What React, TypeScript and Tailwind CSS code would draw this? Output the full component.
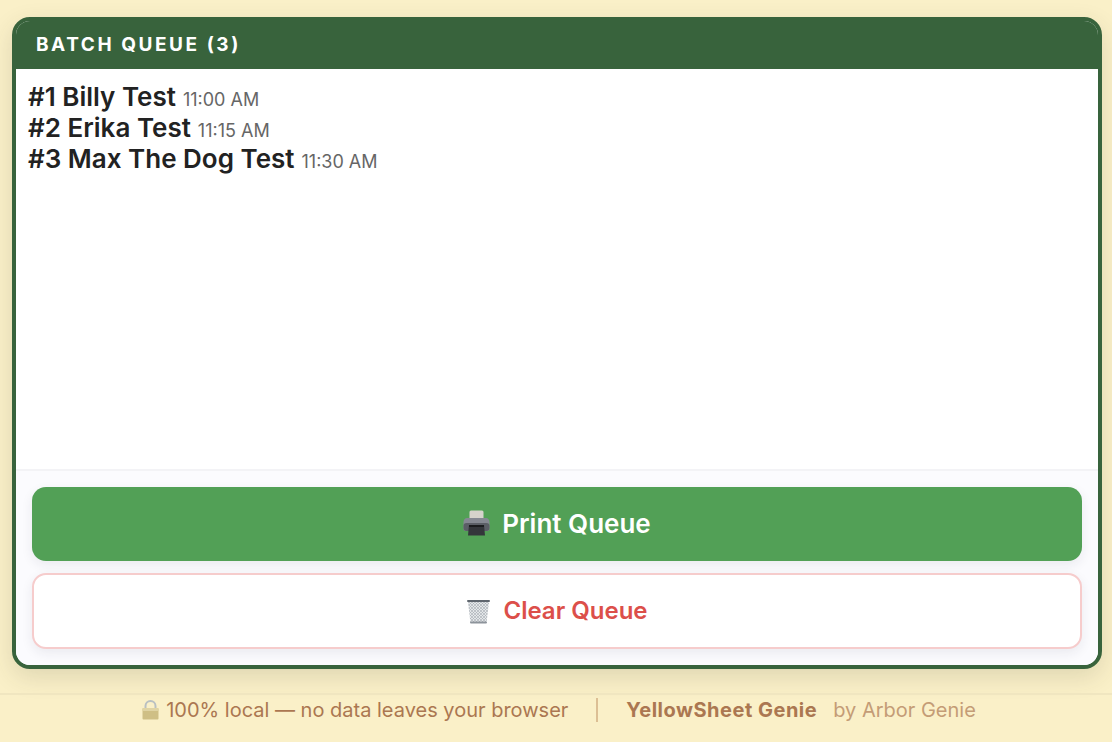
const queue = [
  { name: "#1 Billy Test", time: "11:00 AM" },
  { name: "#2 Erika Test", time: "11:15 AM" },
  { name: "#3 Max The Dog Test", time: "11:30 AM" },
];

function PrinterIcon() {
  return (
    <svg width="27" height="27" viewBox="0 0 27 27" className="shrink-0">
      <rect x="6.5" y="0.5" width="14" height="10" rx="1.5" fill="#d6d3cc" />
      <path d="M4 8H23C25 8 26.5 10 26.5 12V19C26.5 20.5 25.5 21 24 21H3C1.5 21 0.5 20.5 0.5 19V12C0.5 10 2 8 4 8Z" fill="#858892" />
      <rect x="0.5" y="13" width="26" height="8" rx="3" fill="#5b5e66" />
      <path d="M6 15H21L22 25.5H5Z" fill="#34363b" />
      <rect x="6" y="15" width="15" height="2" fill="#1b1c1f" />
    </svg>
  );
}

function TrashIcon() {
  return (
    <svg width="25" height="25" viewBox="0 0 25 25" className="shrink-0">
      <defs>
        <pattern id="mesh" width="3" height="3" patternUnits="userSpaceOnUse">
          <rect width="3" height="3" fill="#e4e7e9" />
          <path d="M0 0L3 3M3 0L0 3" stroke="#a4abb1" strokeWidth="0.6" />
        </pattern>
      </defs>
      <path d="M2 3H23L20.5 24H4.5Z" fill="url(#mesh)" />
      <rect x="1" y="1" width="23" height="2" rx="1" fill="#5f666e" />
      <rect x="4" y="22.5" width="17" height="2" rx="1" fill="#8d949b" />
    </svg>
  );
}

function LockIcon() {
  return (
    <svg width="17" height="20" viewBox="0 0 17 20" className="shrink-0">
      <path d="M3.5 9V6a5 5 0 0 1 10 0V9" fill="none" stroke="#b9c0c2" strokeWidth="2" />
      <rect x="0.5" y="8" width="16" height="11.5" rx="1" fill="#cfbf85" />
      <rect x="0.5" y="8" width="16" height="3" rx="1" fill="#e0d4a4" />
    </svg>
  );
}

export default function App() {
  return (
    <div className="flex h-[742px] w-[1112px] flex-col overflow-hidden bg-[#faf0c8] font-['Inter',sans-serif]">
      <div className="flex flex-1 flex-col pt-[17px] pr-[10px] pb-6 pl-3">
        <div className="flex flex-1 flex-col overflow-hidden rounded-[18px] border-4 border-[#38633c] bg-white shadow-[0_8px_24px_rgba(60,60,40,0.14)]">
          <div className="flex h-12 items-center bg-[#38633c] px-5 text-[19px] font-bold tracking-[2.55px] text-white">
            BATCH QUEUE (3)
          </div>
          <div className="flex-1 px-3 pt-3">
            {queue.map((item) => (
              <div key={item.name} className="h-[31px] text-[26px] leading-[31px] font-semibold text-[#222222]">
                {item.name}
                <span className="ml-[7px] text-[18px] font-normal text-[#666666]">{item.time}</span>
              </div>
            ))}
          </div>
          <div className="flex flex-col gap-3 border-t-2 border-[#f3f3f6] bg-[#fbfbfe] px-4 pt-4 pb-4">
            <button className="flex h-[74px] items-center justify-center gap-3 rounded-[14px] bg-[#52a056] pb-0.5 text-[26px] font-semibold text-white shadow-[0_4px_12px_rgba(40,40,70,0.08)]">
              <PrinterIcon />
              Print Queue
            </button>
            <button className="flex h-[76px] items-center justify-center gap-3 rounded-[14px] border-2 border-[#f6cccc] bg-white text-[24px] font-semibold text-[#dc4f4a] shadow-[0_4px_12px_rgba(40,40,70,0.08)]">
              <TrashIcon />
              Clear Queue
            </button>
          </div>
        </div>
      </div>
      <div className="flex h-[49px] items-start justify-center border-t-2 border-[#f0e6c0] pt-[3px] pl-1.5 text-[20px] text-[#ab7751]">
        <div className="flex h-[24px] items-center">
          <LockIcon />
          <span className="ml-[7px]">100% local — no data leaves your browser</span>
          <span className="mx-7 h-[24px] w-0.5 bg-[#dcbf94]" />
          <span className="font-bold tracking-[0.5px]">YellowSheet Genie</span>
          <span className="ml-4 text-[#c49c76]">by Arbor Genie</span>
        </div>
      </div>
    </div>
  );
}
